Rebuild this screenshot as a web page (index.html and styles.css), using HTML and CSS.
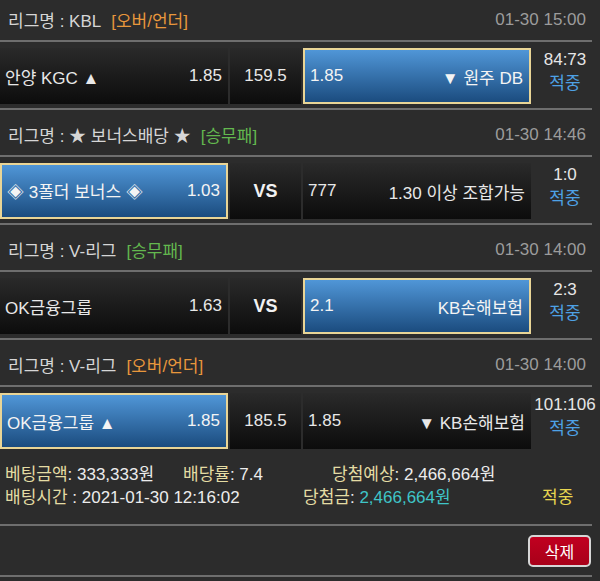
FILE: index.html
```html
<!DOCTYPE html>
<html lang="ko">
<head>
<meta charset="utf-8">
<title>베팅내역</title>
<link rel="stylesheet" href="styles.css">
</head>
<body>
<div class="list">
  <section class="game">
    <div class="league">
      <div class="league-name">리그명 : KBL<span class="tag ou">[오버/언더]</span></div>
      <span class="time">01-30 15:00</span>
    </div>
    <div class="bet">
      <div class="cell"><span>안양 KGC ▲</span><span>1.85</span></div>
      <div class="cell mid">159.5</div>
      <div class="cell sel"><span>1.85</span><span>▼ 원주 DB</span></div>
      <div class="score"><div>84:73</div><div class="hit">적중</div></div>
    </div>
  </section>

  <section class="game">
    <div class="league">
      <div class="league-name">리그명 : ★ 보너스배당 ★<span class="tag wdl">[승무패]</span></div>
      <span class="time">01-30 14:46</span>
    </div>
    <div class="bet">
      <div class="cell sel"><span>◈ 3폴더 보너스 ◈</span><span>1.03</span></div>
      <div class="cell mid vs">VS</div>
      <div class="cell"><span>777</span><span>1.30 이상 조합가능</span></div>
      <div class="score"><div>1:0</div><div class="hit">적중</div></div>
    </div>
  </section>

  <section class="game">
    <div class="league">
      <div class="league-name">리그명 : V-리그<span class="tag wdl">[승무패]</span></div>
      <span class="time">01-30 14:00</span>
    </div>
    <div class="bet">
      <div class="cell"><span>OK금융그룹</span><span>1.63</span></div>
      <div class="cell mid vs">VS</div>
      <div class="cell sel"><span>2.1</span><span>KB손해보험</span></div>
      <div class="score"><div>2:3</div><div class="hit">적중</div></div>
    </div>
  </section>

  <section class="game">
    <div class="league">
      <div class="league-name">리그명 : V-리그<span class="tag ou">[오버/언더]</span></div>
      <span class="time">01-30 14:00</span>
    </div>
    <div class="bet last">
      <div class="cell sel"><span>OK금융그룹 ▲</span><span>1.85</span></div>
      <div class="cell mid">185.5</div>
      <div class="cell"><span>1.85</span><span>▼ KB손해보험</span></div>
      <div class="score"><div>101:106</div><div class="hit">적중</div></div>
    </div>
    <div class="info">
      <div class="info-line">
        <span class="amount"><span class="label">베팅금액</span>: 333,333원</span>
        <span class="rate"><span class="label">배당률</span>: 7.4</span>
        <span><span class="label">당첨예상</span>: 2,466,664원</span>
      </div>
      <div class="info-line">
        <span class="bettime"><span class="label">배팅시간</span> : 2021-01-30 12:16:02</span>
        <span class="win"><span class="label">당첨금</span>: <span class="prize">2,466,664원</span></span>
        <span class="result">적중</span>
      </div>
    </div>
    <div class="actions">
      <button class="delete" type="button">삭제</button>
    </div>
  </section>
</div>
</body>
</html>
```

FILE: styles.css
```css
* {
  box-sizing: border-box;
}

html, body {
  margin: 0;
  height: 581px;
  overflow: hidden;
}

body {
  background: #2c2c2c;
  font-family: "Liberation Sans", "Noto Sans CJK KR", sans-serif;
  color: #e4e4e4;
}

.list {
  width: 592px;
  margin-top: -5px;
}

.league {
  height: 47px;
  padding: 4px 6px 0 8px;
  display: flex;
  align-items: center;
  justify-content: space-between;
  border-bottom: 2px solid #6e6e6e;
  font-size: 17px;
  color: #d6d6d6;
}

.league-name {
  display: flex;
  align-items: center;
  white-space: pre;
}

.tag {
  margin-left: 10px;
}

.tag.ou {
  color: #e8973c;
}

.tag.wdl {
  color: #63b84f;
}

.time {
  color: #9c9c9c;
  font-size: 17px;
}

.bet {
  display: grid;
  grid-template-columns: 228px 71px 228px minmax(0, 1fr);
  column-gap: 2px;
  height: 68px;
  padding: 6px 0 4px;
  border-bottom: 2px solid #6e6e6e;
}

.bet.last {
  height: 66px;
  border-bottom: 0;
}

.cell {
  height: 56px;
  display: flex;
  align-items: center;
  justify-content: space-between;
  padding: 0 6px 0 5px;
  font-size: 17px;
  color: #e8e8e8;
  background: linear-gradient(#2a2a2a, #0c0c0c);
  white-space: nowrap;
}

.cell.mid {
  justify-content: center;
  padding: 0;
}

.cell.vs {
  font-weight: bold;
  font-size: 18px;
  color: #f2f2f2;
}

.cell.sel {
  background: linear-gradient(#5096d7, #1b4c7f);
  border: 2px solid #e9d596;
  color: #f4f4f4;
}

.score {
  display: flex;
  flex-direction: column;
  align-items: center;
  padding-left: 5px;
  font-size: 17px;
  line-height: 24px;
  color: #e6e6e6;
  white-space: nowrap;
}

.hit {
  color: #4ea2e6;
}

.info {
  height: 73px;
  padding: 10px 0 0 5px;
  border-bottom: 2px solid #6e6e6e;
  font-size: 17px;
  line-height: 23px;
  color: #ececec;
}

.info-line {
  display: flex;
  white-space: nowrap;
}

.label {
  color: #e4dca4;
}

.amount {
  width: 178px;
}

.rate {
  width: 149px;
}

.bettime {
  width: 298px;
}

.win {
  width: 239px;
}

.prize {
  color: #3fc5c8;
}

.result {
  color: #e8d650;
}

.actions {
  display: flex;
  justify-content: flex-end;
  height: 51px;
  padding: 9px 1px 0 0;
  border-bottom: 2px solid #6e6e6e;
}

.delete {
  width: 63px;
  height: 32px;
  border: 2px solid #d6d6d6;
  border-radius: 5px;
  background: linear-gradient(#c10020, #a80019);
  color: #ffffff;
  font-family: "Liberation Sans", "Noto Sans CJK KR", sans-serif;
  font-size: 16px;
  padding: 0;
}
```
